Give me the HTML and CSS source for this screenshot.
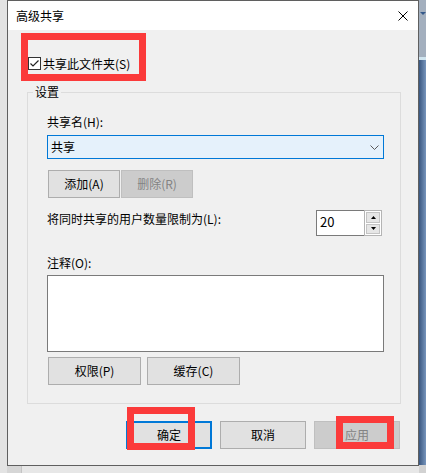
FILE: index.html
```html
<!DOCTYPE html>
<html lang="zh-CN">
<head>
<meta charset="utf-8">
<title>高级共享</title>
<link rel="stylesheet" href="styles.css">
</head>
<body>
<div class="screen">
  <div class="side-left"></div>
  <div class="center-col">
    <div class="dialog">
      <div class="titlebar">
        <span class="title">高级共享</span>
        <svg class="close" width="10" height="10" viewBox="0 0 10 10"><path d="M0.5 0.5L9.5 9.5M9.5 0.5L0.5 9.5" stroke="#000" stroke-width="1" fill="none"/></svg>
      </div>
      <div class="body">
        <div class="check-row">
          <span class="checkbox"><svg width="11" height="11" viewBox="0 0 11 11"><path d="M1.5 5.5L4 8L9.5 2.5" stroke="#222" stroke-width="1.2" fill="none"/></svg></span>
          <span class="check-label">共享此文件夹(S)</span>
        </div>
        <fieldset class="group">
          <legend class="group-title">设置</legend>
          <div class="group-inner">
            <div class="label">共享名(H):</div>
            <div class="combo">
              <span>共享</span>
              <svg width="9" height="5" viewBox="0 0 9 5"><path d="M0.5 0.5L4.5 4.5L8.5 0.5" stroke="#5a5a5a" stroke-width="1" fill="none"/></svg>
            </div>
            <div class="btn-row">
              <button class="btn btn-sm">添加(A)</button>
              <button class="btn btn-sm disabled">删除(R)</button>
            </div>
            <div class="spin-row">
              <div class="label spin-label">将同时共享的用户数量限制为(L):</div>
              <div class="spin">
                <div class="spin-input">20</div>
                <div class="spin-buttons">
                  <div class="spin-btn"><svg width="5" height="3" viewBox="0 0 5 3"><path d="M0 3L2.5 0L5 3Z" fill="#000"/></svg></div>
                  <div class="spin-btn"><svg width="5" height="3" viewBox="0 0 5 3"><path d="M0 0L2.5 3L5 0Z" fill="#000"/></svg></div>
                </div>
              </div>
            </div>
            <div class="label comment-label">注释(O):</div>
            <textarea class="comment"></textarea>
            <div class="btn-row btn-row-2">
              <button class="btn btn-md">权限(P)</button>
              <button class="btn btn-md">缓存(C)</button>
            </div>
          </div>
        </fieldset>
        <div class="footer">
          <button class="btn btn-lg default">确定</button>
          <button class="btn btn-lg">取消</button>
          <button class="btn btn-lg disabled">应用</button>
        </div>
      </div>
      <div class="mark mark-1"></div>
      <div class="mark mark-2"></div>
      <div class="mark mark-3"></div>
    </div>
    <div class="bottom-strip">
      <div class="bs-a"></div>
      <div class="bs-b"></div>
    </div>
  </div>
  <div class="side-right">
    <div class="rs-top"><span class="rs-arrow"></span></div>
    <div class="rs-line"></div>
    <div class="rs-blue"></div>
    <div class="rs-bottom"></div>
  </div>
</div>
</body>
</html>
```
FILE: styles.css
```css
* { box-sizing: border-box; }
html, body { margin: 0; padding: 0; }
body {
  width: 426px;
  height: 473px;
  overflow: hidden;
  background: #dedede;
  font-family: "Noto Sans CJK SC", "Microsoft YaHei", sans-serif;
  font-size: 12px;
  line-height: 14px;
  color: #000;
}
.screen { display: flex; height: 473px; }
.side-left { width: 7px; background: #e3e3e3; }
.center-col { width: 412px; display: flex; flex-direction: column; }
.dialog {
  position: relative;
  height: 466px;
  border: 1px solid #5f5f5f;
  background: #f0f0f0;
  display: flex;
  flex-direction: column;
}
.titlebar {
  height: 29px;
  background: #fff;
  display: flex;
  align-items: center;
  justify-content: space-between;
  padding: 0 10px 0 8px;
}
.close { display: block; }
.body {
  flex: 1;
  padding: 0 17px 0 19px;
  display: flex;
  flex-direction: column;
}
.check-row {
  margin-top: 27px;
  height: 13px;
  display: flex;
  align-items: center;
  gap: 2px;
}
.checkbox {
  width: 13px;
  height: 13px;
  margin-left: 1px;
  border: 1px solid #333;
  background: #fff;
  display: flex;
  align-items: center;
  justify-content: center;
}
.checkbox svg { display: block; }
.group {
  margin: 15px 0 0 0;
  padding: 0;
  border: 1px solid #dcdcdc;
  min-width: 0;
}
.group-title {
  margin-left: 5px;
  padding: 0 2px;
  line-height: 14px;
}
.group-inner { padding: 16px 16px 18px 19px; display: flex; flex-direction: column; }
.label { height: 14px; white-space: nowrap; }
.combo {
  margin-top: 6px;
  height: 24px;
  border: 1px solid #0078d7;
  background: #e5f1fb;
  display: flex;
  align-items: center;
  justify-content: space-between;
  padding: 0 4px 0 3px;
}
.combo svg { display: block; }
.btn-row { margin-top: 11px; display: flex; gap: 1px; padding-left: 1px; }
.btn {
  font: inherit;
  color: #000;
  margin: 0;
  padding: 0;
  height: 28px;
  border: 1px solid #adadad;
  background: #e1e1e1;
  display: flex;
  align-items: center;
  justify-content: center;
}
.btn.disabled { background: #cccccc; border-color: #bfbfbf; color: #838383; }
.btn.default { border: 2px solid #0078d7; }
.btn-sm { width: 72px; }
.btn-md { width: 93px; }
.btn-lg { width: 86px; }
.spin-row { margin-top: 12px; height: 26px; display: flex; align-items: flex-start; }
.spin-label { margin-top: 2px; }
.spin { margin-left: auto; margin-right: 2px; width: 66px; height: 26px; display: flex; }
.spin-input {
  flex: 1;
  border: 1px solid #7a7a7a;
  border-right: none;
  background: #fff;
  padding: 0 0 2px 3px;
  display: flex;
  align-items: center;
  font-size: 13px;
}
.spin-buttons {
  width: 18px;
  border: 1px solid #b4b4b4;
  padding: 1px;
  display: flex;
  flex-direction: column;
  gap: 1px;
  background: #fff;
}
.spin-btn {
  flex: 1;
  background: #e6e6e6;
  border: 1px solid #c4c4c4;
  display: flex;
  align-items: center;
  justify-content: center;
}
.spin-btn svg { display: block; }
.comment-label { margin-top: 20px; }
.comment {
  display: block;
  margin: 5px 0 0 0;
  width: 100%;
  height: 77px;
  border: 1px solid #7a7a7a;
  background: #fff;
  resize: none;
  font: inherit;
  padding: 0;
}
.btn-row-2 { margin-top: 5px; gap: 6px; }
.footer {
  margin-top: 17px;
  display: flex;
  justify-content: flex-end;
  gap: 8px;
  padding-right: 1px;
}
.mark {
  position: absolute;
  border: 7px solid #fb3a3a;
}
.mark-1 { left: 13px; top: 32px; width: 125px; height: 48px; }
.mark-2 { left: 119px; top: 406px; width: 68px; height: 43px; }
.mark-3 { left: 328px; top: 415px; width: 58px; height: 33px; }
.bottom-strip { flex: 1; display: flex; }
.bs-a { width: 15px; background: #d6d6d6; border-right: 1px solid #c4c4c4; }
.bs-b { flex: 1; background: #e7e7e7; }
.side-right { width: 7px; display: flex; flex-direction: column; }
.rs-top { height: 57px; background: #a3afbe; display: flex; justify-content: center; padding-top: 12px; }
.rs-arrow {
  width: 0; height: 0;
  border-left: 3px solid transparent;
  border-right: 3px solid transparent;
  border-top: 3px solid #35598a;
}
.rs-line { height: 3px; background: #cfe4ef; }
.rs-blue { flex: 1; background: linear-gradient(to right, #3a5780, #7795bc); }
.rs-bottom { height: 8px; background: #d2d2d2; }
```
